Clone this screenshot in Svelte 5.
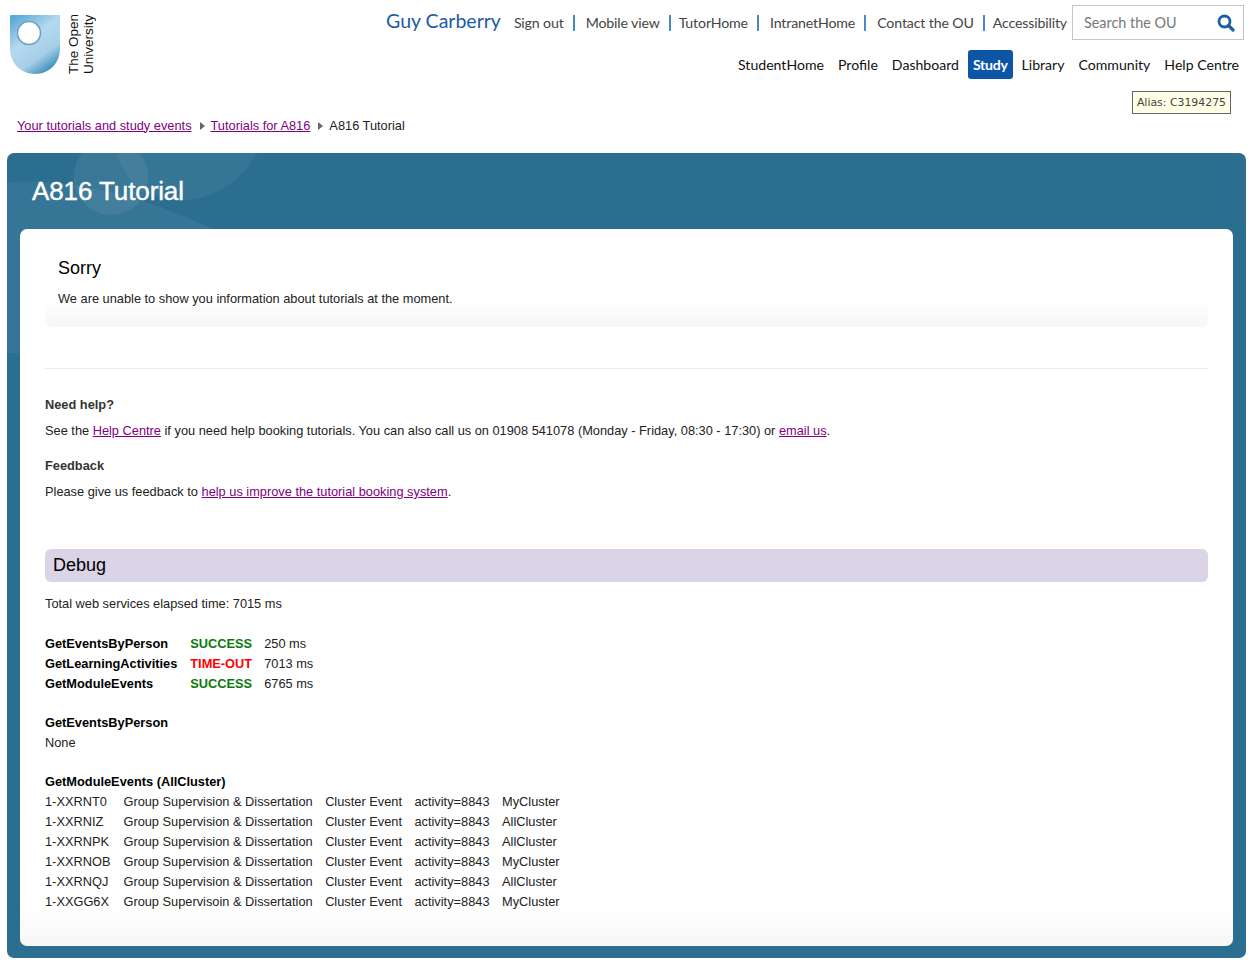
<script>
  const topLinks = [
    { label: "Sign out", sepClass: "wide" },
    { label: "Mobile view", sepClass: "tight" },
    { label: "TutorHome", sepClass: "wide" },
    { label: "IntranetHome", sepClass: "wide" },
    { label: "Contact the OU", sepClass: "tight" },
    { label: "Accessibility" },
  ];
  const mainNav = ["StudentHome", "Profile", "Dashboard", "Study", "Library", "Community", "Help Centre"];

  const services = [
    { name: "GetEventsByPerson", status: "SUCCESS", time: "250 ms" },
    { name: "GetLearningActivities", status: "TIME-OUT", time: "7013 ms" },
    { name: "GetModuleEvents", status: "SUCCESS", time: "6765 ms" },
  ];

  const events = [
    ["1-XXRNT0", "Group Supervision & Dissertation", "Cluster Event", "activity=8843", "MyCluster"],
    ["1-XXRNIZ", "Group Supervision & Dissertation", "Cluster Event", "activity=8843", "AllCluster"],
    ["1-XXRNPK", "Group Supervision & Dissertation", "Cluster Event", "activity=8843", "AllCluster"],
    ["1-XXRNOB", "Group Supervision & Dissertation", "Cluster Event", "activity=8843", "MyCluster"],
    ["1-XXRNQJ", "Group Supervision & Dissertation", "Cluster Event", "activity=8843", "AllCluster"],
    ["1-XXGG6X", "Group Supervisoin & Dissertation", "Cluster Event", "activity=8843", "MyCluster"],
  ];
</script>

<header class="site-header">
  <a class="logo" href="#top">
    <svg class="shield" width="50" height="59" viewBox="0 0 50 59">
      <defs>
        <linearGradient id="shieldFill" x1="0.15" y1="0" x2="0.75" y2="1">
          <stop offset="0" stop-color="#5aa9d6" />
          <stop offset="0.4" stop-color="#b5d9ef" />
          <stop offset="0.72" stop-color="#a5cfe8" />
          <stop offset="1" stop-color="#2f86b6" />
        </linearGradient>
      </defs>
      <path d="M1 0H49a1 1 0 0 1 1 1V34C50 48 39 59 25 59S0 48 0 34V1a1 1 0 0 1 1-1Z" fill="url(#shieldFill)" />
      <circle cx="19" cy="18" r="11.5" fill="#fff" stroke="#6f9fbe" stroke-width="1.5" />
    </svg>
    <span class="logo-text">The Open<br />University</span>
  </a>

  <div class="header-right">
    <div class="top-row">
      <span class="user-name">Guy Carberry</span>
      <nav class="top-links">
        {#each topLinks as link}
          <a href="#top">{link.label}</a>
          {#if link.sepClass}<span class="sep {link.sepClass}"></span>{/if}
        {/each}
      </nav>
      <div class="search">
        <span class="search-text">Search the OU</span>
        <svg width="18" height="18" viewBox="0 0 18 18">
          <circle cx="7.5" cy="7.5" r="5.5" fill="none" stroke="#1b5fa5" stroke-width="2.8" />
          <path d="M11.5 11.5L16 16" stroke="#1b5fa5" stroke-width="3.2" stroke-linecap="round" />
        </svg>
      </div>
    </div>
    <nav class="main-nav">
      {#each mainNav as item}
        <a href="#top" class:active={item === "Study"}>{item}</a>
      {/each}
    </nav>
    <div class="alias">Alias: C3194275</div>
  </div>
</header>

<div class="breadcrumb">
  <a href="#top">Your tutorials and study events</a>
  <span class="crumb-arrow"></span>
  <a href="#top">Tutorials for A816</a>
  <span class="crumb-arrow"></span>
  <span>A816 Tutorial</span>
</div>

<main class="panel">
  <svg class="watermark" width="300" height="230" viewBox="0 0 300 230">
    <path d="M0 29C70 25 140 45 206 76H0Z" fill="#fff" opacity="0.05" />
    <circle cx="104" cy="24.5" r="37.5" fill="#fff" opacity="0.07" />
    <path d="M110 0C125 62 215 65 250 0Z" fill="#fff" opacity="0.05" />
    <path d="M0 76H13V200H0Z" fill="#fff" opacity="0.05" />
  </svg>

  <h1>A816 Tutorial</h1>

  <div class="card">
    <section class="sorry">
      <h2>Sorry</h2>
      <p>We are unable to show you information about tutorials at the moment.</p>
    </section>

    <hr />

    <h3 class="help-head">Need help?</h3>
    <p class="help-text">
      See the <a href="#top">Help Centre</a> if you need help booking tutorials. You can also call us on 01908 541078 (Monday - Friday, 08:30 - 17:30) or <a href="#top">email us</a>.
    </p>
    <h3 class="feedback-head">Feedback</h3>
    <p class="help-text">
      Please give us feedback to <a href="#top">help us improve the tutorial booking system</a>.
    </p>

    <h2 class="debug-head">Debug</h2>
    <p class="elapsed">Total web services elapsed time: 7015 ms</p>

    <table class="services">
      <tbody>
        {#each services as s}
          <tr>
            <th>{s.name}</th>
            <td class={s.status === "SUCCESS" ? "ok" : "bad"}>{s.status}</td>
            <td>{s.time}</td>
          </tr>
        {/each}
      </tbody>
    </table>

    <div class="block first">
      <strong>GetEventsByPerson</strong>
      <div>None</div>
    </div>

    <div class="block">
      <strong>GetModuleEvents (AllCluster)</strong>
      <table class="events">
        <tbody>
          {#each events as row}
            <tr>
              {#each row as cell}
                <td>{cell}</td>
              {/each}
            </tr>
          {/each}
        </tbody>
      </table>
    </div>
  </div>
</main>

<style>
  :global(body) {
    margin: 0;
    background: #fff;
    font-family: "Liberation Sans", Arial, sans-serif;
    font-size: 12.8px;
    color: #222;
  }

  .site-header {
    display: flex;
    justify-content: space-between;
    height: 115px;
  }

  .logo {
    display: flex;
    align-items: flex-start;
    gap: 6px;
    padding: 15px 0 0 10px;
    color: #111;
    text-decoration: none;
  }

  .logo-text {
    writing-mode: vertical-rl;
    transform: rotate(180deg);
    height: 59px;
    font-size: 13.5px;
    line-height: 15px;
    text-align: left;
    white-space: nowrap;
  }

  .header-right {
    display: flex;
    flex-direction: column;
    align-items: flex-end;
    padding: 5px 13px 0 0;
    font-family: Lato, sans-serif;
  }

  .top-row {
    display: flex;
    align-items: center;
    height: 35px;
  }

  .user-name {
    font-size: 19.5px;
    color: #1b5ba3;
    margin: -5px 13px 0 0;
  }

  .top-links {
    display: flex;
    align-items: center;
    font-size: 14.2px;
    letter-spacing: -0.16px;
    color: #444;
  }

  .top-links a {
    color: #444;
    text-decoration: none;
  }

  .sep {
    width: 2px;
    height: 16px;
    margin-left: 9px;
    background: #4a88c8;
  }

  .sep.wide {
    margin-right: 11px;
  }

  .sep.tight {
    margin-right: 8px;
  }

  .search {
    display: flex;
    align-items: center;
    justify-content: space-between;
    box-sizing: border-box;
    width: 172px;
    height: 35px;
    margin-left: 5px;
    padding: 0 8px 0 11px;
    border: 1px solid #c4c4c4;
    font-size: 14.4px;
    color: #777;
  }

  .main-nav {
    display: flex;
    align-items: center;
    margin: 10px -2px 0 0;
    font-size: 14.1px;
  }

  .main-nav a {
    padding: 0 5px;
    margin: 0 2px;
    height: 29px;
    line-height: 29px;
    color: #111;
    text-decoration: none;
    border-radius: 3px;
  }

  .main-nav a.active {
    background: #0d56a6;
    color: #fff;
    font-weight: 700;
    letter-spacing: -0.3px;
  }

  .alias {
    margin: 12px 13px 0 0;
    padding: 0 4px;
    height: 21px;
    line-height: 22px;
    background: #ffffe6;
    border: 1px solid #666;
    font-family: "DejaVu Sans", Verdana, sans-serif;
    font-size: 10.9px;
    color: #444;
  }

  .breadcrumb {
    display: flex;
    align-items: center;
    height: 20px;
    padding-left: 17px;
    color: #222;
  }

  .breadcrumb a,
  .card a {
    color: #800080;
  }

  .crumb-arrow {
    width: 0;
    height: 0;
    margin: 1px 6px 0 8px;
    border-left: 5px solid #666;
    border-top: 4px solid transparent;
    border-bottom: 4px solid transparent;
  }

  .panel {
    position: relative;
    margin: 18px 11px 7px 7px;
    padding: 0 13px 12px;
    background: #2b6e90;
    border-radius: 7px;
    overflow: hidden;
  }

  .watermark {
    position: absolute;
    top: 0;
    left: 0;
  }

  h1 {
    position: relative;
    margin: 0;
    height: 76px;
    padding: 21px 0 0 12px;
    box-sizing: border-box;
    font-size: 26px;
    line-height: 34px;
    font-weight: 400;
    color: #fff;
    -webkit-text-stroke: 0.4px #fff;
    letter-spacing: -0.1px;
  }

  .card {
    position: relative;
    padding: 0 25px 34px;
    background: linear-gradient(to bottom, #fff calc(100% - 40px), #f6f6f6);
    border-radius: 7px;
  }

  .sorry {
    padding: 27px 13px 18px;
    background: linear-gradient(to bottom, #fff 70%, #f7f7f7);
    border-radius: 0 0 7px 7px;
  }

  h2 {
    margin: 0;
    font-size: 18px;
    font-weight: 400;
    color: #000;
    line-height: 24px;
  }

  .sorry p {
    margin: 9px 0 0;
    line-height: 20px;
  }

  hr {
    margin: 41px 0 0;
    border: 0;
    border-top: 1px solid #ececec;
  }

  h3 {
    margin: 0;
    font-size: 12.8px;
    line-height: 20px;
    color: #333;
  }

  .help-head {
    margin-top: 26px;
  }

  .feedback-head {
    margin-top: 15px;
  }

  .help-text {
    margin: 6px 0 0;
    line-height: 20px;
  }

  .debug-head {
    margin-top: 47px;
    height: 33px;
    line-height: 32px;
    padding-left: 8px;
    background: #dbd3e6;
    border-radius: 6px;
  }

  .elapsed {
    margin: 12px 0 0;
    line-height: 20px;
  }

  table {
    border-collapse: collapse;
  }

  th,
  td {
    padding: 0;
    height: 20px;
    text-align: left;
    white-space: nowrap;
  }

  .services {
    margin-top: 19px;
  }

  .services th {
    padding-right: 13px;
    color: #000;
  }

  .services td {
    padding-right: 12px;
  }

  .ok {
    font-weight: 700;
    color: #0a7a0a;
  }

  .bad {
    font-weight: 700;
    color: #f00;
  }

  .block {
    margin-top: 19px;
    line-height: 20px;
  }

  .block.first {
    margin-top: 20px;
  }

  .block strong {
    color: #000;
  }

  .events td {
    padding-right: 12.5px;
  }

  .events td:first-child {
    padding-right: 13px;
  }
</style>
